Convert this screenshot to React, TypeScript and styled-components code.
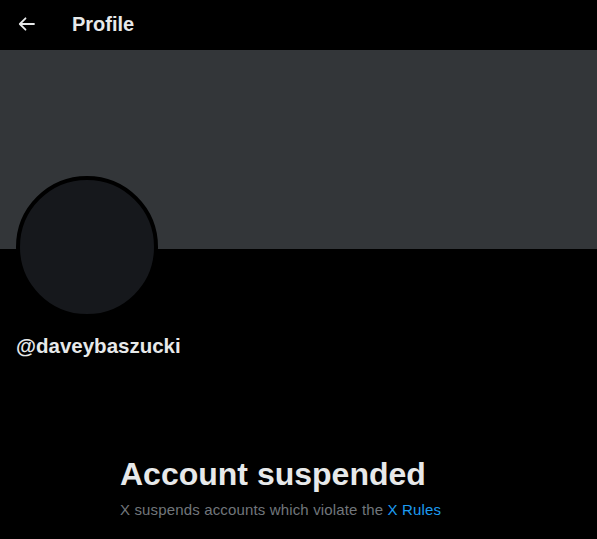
import React from "react";
import styled, { createGlobalStyle } from "styled-components";

const Global = createGlobalStyle`
  html, body { margin: 0; padding: 0; background: #000; }
  body { font-family: "Liberation Sans", Arial, sans-serif; color: #e7e9ea; }
  * { box-sizing: border-box; }
`;

const Page = styled.div`
  width: 597px;
  height: 539px;
  background: #000;
  display: flex;
  flex-direction: column;
  overflow: hidden;
`;

const TopBar = styled.header`
  height: 50px;
  display: flex;
  align-items: center;
  padding: 0 16px;
`;

const BackButton = styled.div`
  width: 36px;
  height: 36px;
  margin-right: 20px;
  display: flex;
  align-items: center;
  justify-content: flex-start;
  padding-left: 2px;
  margin-top: -2px;
`;

const Title = styled.h2`
  margin: 0;
  font-size: 20px;
  font-weight: 700;
  line-height: 24px;
  color: #e7e9ea;
  margin-top: -2px;
`;

const Banner = styled.div`
  height: 199px;
  background: #333639;
  flex-shrink: 0;
`;

const ProfileArea = styled.div`
  padding: 0 16px;
  display: flex;
  flex-direction: column;
`;

const Avatar = styled.div`
  width: 142px;
  height: 142px;
  margin-top: -73px;
  border-radius: 50%;
  border: 4px solid #000;
  background: #16181c;
`;

const Handle = styled.div`
  margin-top: 16px;
  font-size: 20.5px;
  font-weight: 700;
  line-height: 24px;
  color: #e7e9ea;
`;

const Notice = styled.div`
  margin-top: 98px;
  padding-left: 120px;
  display: flex;
  flex-direction: column;
`;

const NoticeTitle = styled.div`
  font-size: 32px;
  font-weight: 700;
  line-height: 36px;
  color: #e7e9ea;
`;

const NoticeText = styled.div`
  margin-top: 8px;
  font-size: 15px;
  letter-spacing: 0.15px;
  line-height: 20px;
  color: #71767b;
`;

const Link = styled.a`
  color: #1d9bf0;
  text-decoration: none;
`;

export default function App() {
  return (
    <>
      <Global />
      <Page>
        <TopBar>
          <BackButton>
            <svg width="17" height="14" viewBox="0 0 17 14" fill="none">
              <path d="M16 7H2M7.5 1.3L1.8 7l5.7 5.7" stroke="#e7e9ea" strokeWidth="1.8" strokeLinecap="round" strokeLinejoin="round" />
            </svg>
          </BackButton>
          <Title>Profile</Title>
        </TopBar>
        <Banner />
        <ProfileArea>
          <Avatar />
          <Handle>@daveybaszucki</Handle>
        </ProfileArea>
        <Notice>
          <NoticeTitle>Account suspended</NoticeTitle>
          <NoticeText>
            X suspends accounts which violate the <Link>X Rules</Link>
          </NoticeText>
        </Notice>
      </Page>
    </>
  );
}
